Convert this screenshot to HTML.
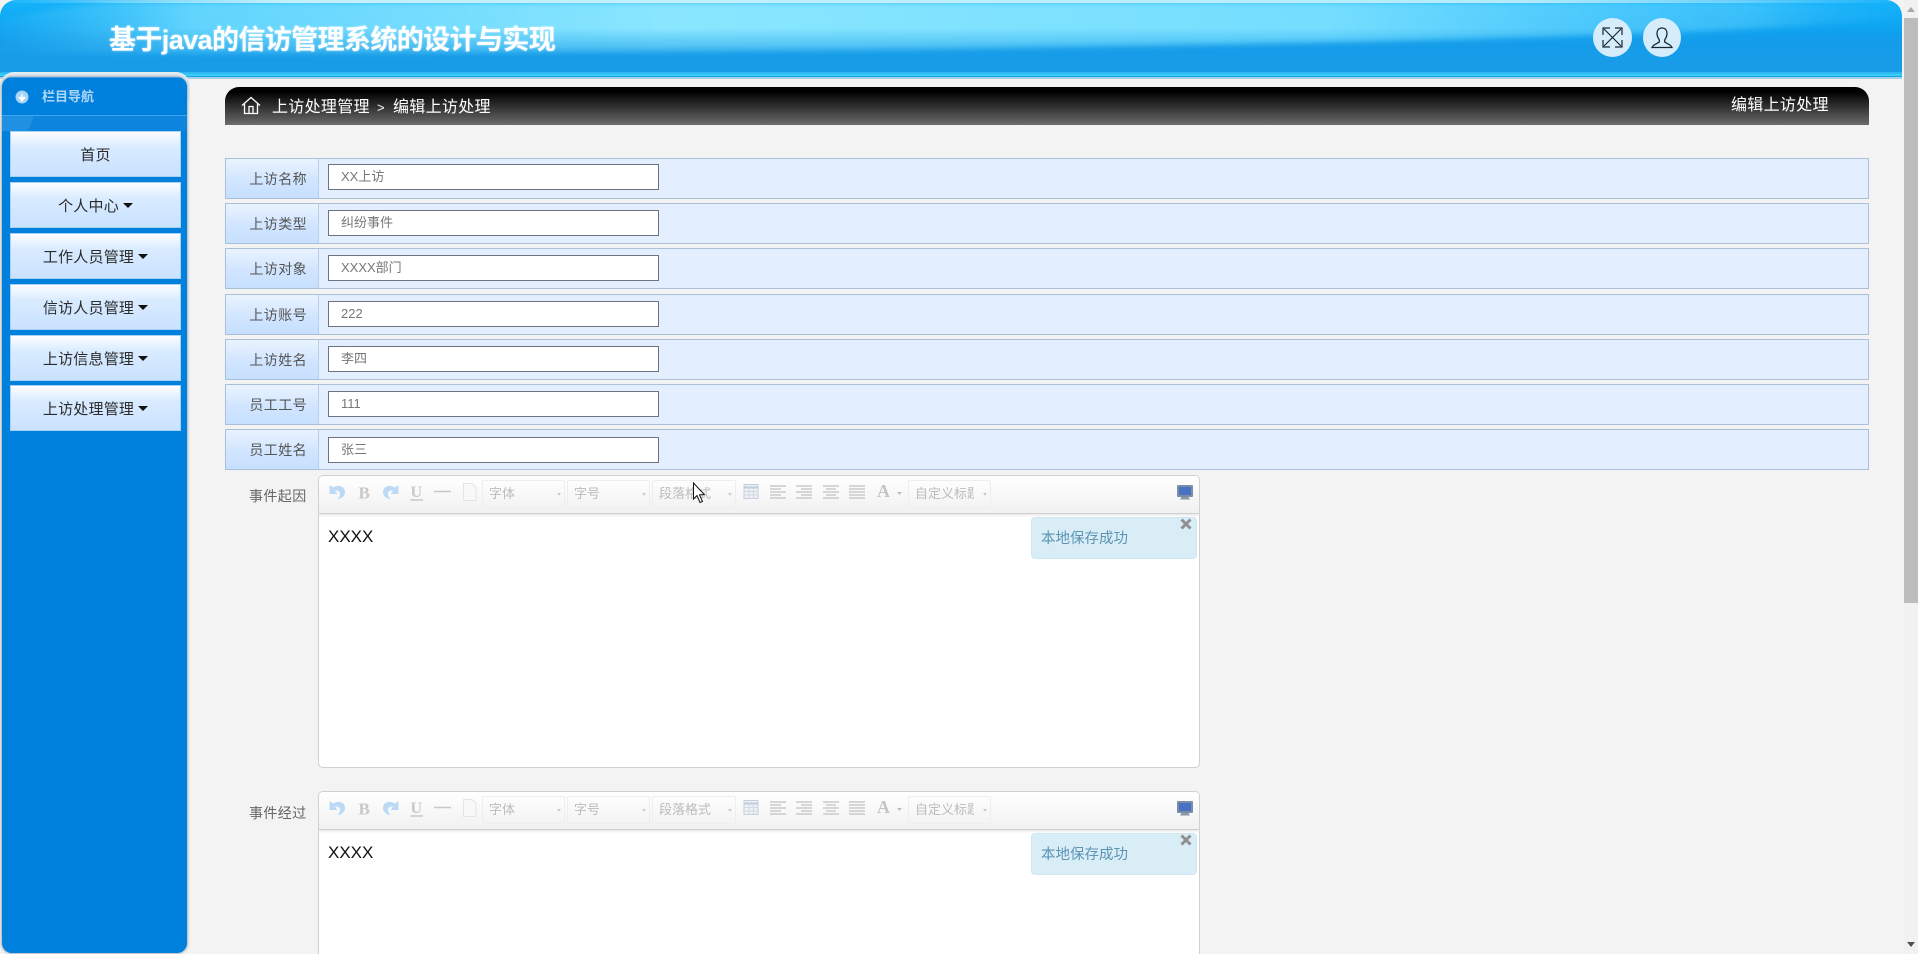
<!DOCTYPE html>
<html lang="zh-CN">
<head>
<meta charset="utf-8">
<title>基于java的信访管理系统的设计与实现</title>
<style>
*{box-sizing:border-box;margin:0;padding:0}
html,body{width:1918px;height:954px;overflow:hidden;background:#f3f3f3}
body{font-family:"Liberation Sans","Noto Sans CJK SC",sans-serif;position:relative}
.a{position:absolute}
#hdr{left:0;top:0;width:1902px;height:79px;border-radius:16px 16px 0 0;overflow:hidden;background:linear-gradient(180deg,#16b4fb 0,#0fa6f2 30%,#0e98e8 60%,#0f90e2 93%)}
#title{left:109px;top:23px;font-size:27px;line-height:34px;font-weight:bold;letter-spacing:-.6px;color:#fff;white-space:nowrap;text-shadow:0 0 2px rgba(255,255,255,.6)}
.circ{width:39px;height:39px;border-radius:50%;background:#d5edfb;top:18px}
#side{left:0;top:72px;width:190px;height:882px;background:linear-gradient(180deg,#e3edf2 0,#e3edf2 24px,#f3f3f3 34px);border-radius:14px 14px 0 0}
#sidein{left:2px;top:77px;width:185px;height:876px;background:#0080dd;border-radius:10px;box-shadow:0 0 3px rgba(60,80,100,.7)}
#navt{left:42px;top:88px;font-size:13px;line-height:18px;font-weight:bold;color:#aed6f6}
.btn{left:10px;width:171px;height:46px;border:1px solid #a8d0f2;background:linear-gradient(180deg,#fbfdff 0,#d9ebff 35%,#c9e2ff 100%);font-size:15px;line-height:47px;letter-spacing:.2px;text-align:center;color:#2b2b2b;white-space:nowrap}
.btn i{display:inline-block;width:0;height:0;border-left:5px solid transparent;border-right:5px solid transparent;border-top:5px solid #111;margin-left:4px;vertical-align:3px}
#crumb{left:225px;top:87px;width:1644px;height:38px;border-radius:14px 14px 0 0;background:linear-gradient(180deg,#000 0,#000 12%,#6c6c6c 100%);color:#fff}
.row{left:225px;width:1644px;height:41px;border:1px solid #aac0d9;background:#e3efff}
.lab{left:0;top:0;width:93px;height:39px;background:linear-gradient(180deg,#eaf3ff 0,#cfe4ff 60%,#c7e0ff 100%);border-right:1px solid #b9d0ea;font-size:14px;line-height:41px;letter-spacing:.4px;text-align:right;padding-right:11px;color:#555}
.inp{left:102px;top:6px;width:331px;height:26px;background:#fff;border:1px solid #6f7380;font-size:13px;line-height:24px;padding-left:12px;color:#777;white-space:nowrap}
.elab{left:249px;font-size:14px;line-height:20px;letter-spacing:.4px;color:#666;white-space:nowrap}
.ed{left:318px;width:882px;height:293px;background:#fff;border:1px solid #d0d0d0;border-radius:5px;overflow:hidden}
.tb{left:0;top:0;width:880px;height:38px;background:linear-gradient(180deg,#fff 0,#f1f1f1 100%);border-bottom:1px solid #cfcfcf;box-shadow:0 1px 3px rgba(0,0,0,.12)}
.sel{top:4px;height:28px;border:1px solid #eee;border-radius:2px;font-size:13px;line-height:26px;padding-left:6px;color:#bbb;overflow:hidden;white-space:nowrap}
.sel b{position:absolute;right:3px;top:12px;width:0;height:0;border-left:2px solid transparent;border-right:2px solid transparent;border-top:3px solid #ccc}
.sel span{display:block;overflow:hidden}
.xxxx{left:9px;top:49px;font-size:17px;line-height:24px;color:#111}
.note{left:712px;top:41px;width:166px;height:42px;background:#d9edf7;border:1px solid #cfe7f2;border-radius:4px;font-size:14.5px;line-height:43px;padding-left:9px;color:#5b95b3;white-space:nowrap}
.note svg{position:absolute;left:147px;top:-1px}
#sb{left:1904px;top:0;width:14px;height:954px;background:#f1f1f1}
#th{left:0;top:18px;width:14px;height:585px;background:#bcbcbc}
</style>
</head>
<body>

<div class="a" id="hdr">
  <svg class="a" style="left:0;top:0" width="1902" height="79" viewBox="0 0 1902 79">
    <defs>
      <linearGradient id="g1" x1="0" y1="0" x2="1" y2="0">
        <stop offset="0" stop-color="#4cc8fa" stop-opacity=".1"/>
        <stop offset=".1" stop-color="#6fdcff" stop-opacity=".85"/>
        <stop offset=".35" stop-color="#8ae6ff"/>
        <stop offset=".7" stop-color="#74deff"/>
        <stop offset=".92" stop-color="#5fd2ff" stop-opacity=".5"/>
        <stop offset="1" stop-color="#2cbcfb" stop-opacity=".05"/>
      </linearGradient>
      <linearGradient id="g2" x1="0" y1="0" x2="0" y2="1">
        <stop offset="0" stop-color="#1ba0ea" stop-opacity="0"/>
        <stop offset=".4" stop-color="#1ba0ea" stop-opacity=".55"/>
        <stop offset="1" stop-color="#1b9de8" stop-opacity=".9"/>
      </linearGradient>
      <linearGradient id="g3" x1="0" y1="0" x2="1" y2="0">
        <stop offset="0" stop-color="#fff" stop-opacity="0"/>
        <stop offset=".15" stop-color="#e8fbff" stop-opacity=".8"/>
        <stop offset=".8" stop-color="#d4f6ff" stop-opacity=".8"/>
        <stop offset="1" stop-color="#fff" stop-opacity="0"/>
      </linearGradient>
      <filter id="bl" x="-5%" y="-20%" width="110%" height="140%"><feGaussianBlur stdDeviation="3"/></filter>
    </defs>
    <path filter="url(#bl)" d="M0 20C60 6 100 2 140 2H1760C1800 2 1860 8 1902 12V18C1700 38 1300 44 900 50C500 53 200 54 0 54Z" fill="url(#g1)"/>
    <rect x="0" y="28" width="1902" height="51" fill="url(#g2)"/>
    <rect x="0" y="0" width="1902" height="3" fill="url(#g3)"/>
    <rect x="0" y="72" width="1902" height="2" fill="#2fb9f0"/>
    <rect x="0" y="74" width="1902" height="2" fill="#37d0f8"/>
    <rect x="0" y="76" width="1902" height="1" fill="#18a3df"/>
    <rect x="0" y="77" width="1902" height="2" fill="#a8cfe8"/>
  </svg>
</div>
<div class="a" id="title">基于java的信访管理系统的设计与实现</div>
<div class="a circ" style="left:1593px">
  <svg width="39" height="39" viewBox="0 0 39 39" fill="none" stroke="#1a2630" stroke-width="1.2">
    <path d="M11 11L28 28M28 11L11 28"/>
    <path d="M10 17V10H17M22 10H29V17M29 22V29H22M17 29H10V22"/>
  </svg>
</div>
<div class="a circ" style="left:1643px;width:38px">
  <svg width="38" height="39" viewBox="0 0 38 39" fill="none" stroke="#1a2630" stroke-width="1.3">
    <path d="M19 10C15.500 10 14 12.500 14 15.500C14 18.500 15.500 20.500 16.300 22V24C14.500 25.500 10 26.500 9 29.500H29C28 26.500 23.500 25.500 21.700 24V22C22.500 20.500 24 18.500 24 15.500C24 12.500 22.500 10 19 10Z"/>
  </svg>
</div>

<div class="a" id="side"></div>
<div class="a" id="sidein">
  <svg class="a" style="left:0;top:0" width="185" height="54" viewBox="0 0 185 54">
    <path d="M0 38H185V54H0Z" fill="#0d85de"/>
    <path d="M0 38H32L26 54H0Z" fill="#2090e2"/>
    <path d="M8 0H177" stroke="#3e9ce8" stroke-width="2"/>
    <path d="M0 38.500H185" stroke="#3fa4ee" stroke-width="1"/>
    <circle cx="20" cy="20" r="6.500" fill="#a5d4f6"/>
    <path d="M20 16.500V21M17 20.500L20 24L23 20.500Z" fill="#fff" stroke="#fff" stroke-width="1.200"/>
  </svg>
</div>
<div class="a" id="navt">栏目导航</div>

<div class="a btn" style="top:131px">首页</div>
<div class="a btn" style="top:182px">个人中心<i></i></div>
<div class="a btn" style="top:233px">工作人员管理<i></i></div>
<div class="a btn" style="top:284px">信访人员管理<i></i></div>
<div class="a btn" style="top:335px">上访信息管理<i></i></div>
<div class="a btn" style="top:385px">上访处理管理<i></i></div>

<div class="a" id="crumb">
  <svg class="a" style="left:16px;top:9px" width="20" height="19" viewBox="0 0 20 19" fill="none" stroke="#fff" stroke-width="1.300">
    <path d="M1 9.500L10 1.500L19 9.500"/>
    <path d="M3.500 8V17.500H16.500V8"/>
    <path d="M8 17.500V10.500H12V17.500"/>
  </svg>
  <div class="a" style="left:47px;top:10px;font-size:16px;line-height:22px;white-space:nowrap;letter-spacing:.3px">上访处理管理</div>
  <div class="a" style="left:152px;top:10px;font-size:13px;line-height:22px">&gt;</div>
  <div class="a" style="left:168px;top:10px;font-size:16px;line-height:22px;white-space:nowrap;letter-spacing:.3px">编辑上访处理</div>
  <div class="a" style="left:1506px;top:8px;font-size:16px;line-height:22px;white-space:nowrap;letter-spacing:.3px">编辑上访处理</div>
</div>

<div class="a row" style="top:158px"><div class="a lab">上访名称</div><div class="a inp" style="top:5px">XX上访</div></div>
<div class="a row" style="top:203px"><div class="a lab">上访类型</div><div class="a inp">纠纷事件</div></div>
<div class="a row" style="top:248px"><div class="a lab">上访对象</div><div class="a inp">XXXX部门</div></div>
<div class="a row" style="top:294px"><div class="a lab">上访账号</div><div class="a inp">222</div></div>
<div class="a row" style="top:339px"><div class="a lab">上访姓名</div><div class="a inp">李四</div></div>
<div class="a row" style="top:384px"><div class="a lab">员工工号</div><div class="a inp">111</div></div>
<div class="a row" style="top:429px"><div class="a lab">员工姓名</div><div class="a inp" style="top:7px">张三</div></div>

<div class="a elab" style="top:486px">事件起因</div>
<div class="a ed" style="top:475px">
  <div class="a tb">
    <svg class="a" style="left:1px;top:-1px" width="879" height="37" viewBox="0 0 879 37" fill="none">
      <path d="M9.500 10V19H17.500L15 16C18 15 20 16.500 20 19C20 21 19 22.500 17.500 24C22.500 23.500 25 20.500 25 17C25 11.500 18.500 9 13.500 12.500Z" fill="#bcdaf5"/>
      <text x="38.500" y="23.500" font-family="Liberation Serif,serif" font-weight="bold" font-size="17" fill="#c8c8c8">B</text>
      <path d="M78.500 10V19H70.500L73 16C70 15 68 16.500 68 19C68 21 69 22.500 70.500 24C65.500 23.500 63 20.500 63 17C63 11.500 69.500 9 74.500 12.500Z" fill="#bcdaf5"/>
      <text x="90.500" y="22" font-family="Liberation Serif,serif" font-weight="bold" font-size="16" fill="#c8c8c8">U</text>
      <path d="M90.500 25H103" stroke="#c8c8c8" stroke-width="1.500"/>
      <path d="M114 16.500H131" stroke="#c8c8c8" stroke-width="1.500"/>
      <path d="M143.500 8.500H152L156 12.500V25.500H143.500Z" fill="#f8f8f8" stroke="#e4e4e4"/>
      <rect x="424" y="9.500" width="14" height="14" fill="#eef2f7" stroke="#c6ced9"/>
      <path d="M424 12.500H438" stroke="#bccbdf" stroke-width="2"/>
      <path d="M424 16.500H438M424 20H438M429 12V24M433.500 12V24" stroke="#d2d9e3"/>
      <g stroke="#cacaca" stroke-width="1.500">
        <path d="M450 11H466M450 14H461M450 17H466M450 20H461M450 23H466"/>
        <path d="M476 11H492M481 14H492M476 17H492M481 20H492M476 23H492"/>
        <path d="M503 11H519M506 14H516M503 17H519M506 20H516M503 23H519"/>
        <path d="M529 11H545M529 14H545M529 17H545M529 20H545M529 23H545"/>
      </g>
      <text x="557" y="22" font-family="Liberation Serif,serif" font-weight="bold" font-size="18" fill="#c4c4c4">A</text>
      <path d="M577 17H582L579.500 20Z" fill="#bcbcbc"/>
      <rect x="857" y="10" width="16" height="12" rx="1" fill="#7b8ea6"/>
      <rect x="859" y="12" width="12" height="8" fill="#4a72c4"/>
      <path d="M860 24.500H870L868.500 22H861.500Z" fill="#8c96a4"/>
    </svg>
    <div class="a sel" style="left:163px;width:83px"><span>字体</span><b></b></div>
    <div class="a sel" style="left:248px;width:83px"><span>字号</span><b></b></div>
    <div class="a sel" style="left:333px;width:84px"><span>段落格式</span><b></b></div>
    <div class="a sel" style="left:589px;width:83px"><span style="width:59px">自定义标题</span><b></b></div>
  </div>
  <div class="a xxxx">XXXX</div>
  <div class="a note">本地保存成功
    <svg width="14" height="14" viewBox="0 0 14 14"><path d="M2.500 2.500L11.500 11.500M11.500 2.500L2.500 11.500" stroke="#8f8f8f" stroke-width="3"/></svg>
  </div>
</div>

<div class="a elab" style="top:803px">事件经过</div>
<div class="a ed" style="top:791px;height:163px;border-bottom:0;border-radius:5px 5px 0 0">
  <div class="a tb">
    <svg class="a" style="left:1px;top:-1px" width="879" height="37" viewBox="0 0 879 37" fill="none">
      <path d="M9.500 10V19H17.500L15 16C18 15 20 16.500 20 19C20 21 19 22.500 17.500 24C22.500 23.500 25 20.500 25 17C25 11.500 18.500 9 13.500 12.500Z" fill="#bcdaf5"/>
      <text x="38.500" y="23.500" font-family="Liberation Serif,serif" font-weight="bold" font-size="17" fill="#c8c8c8">B</text>
      <path d="M78.500 10V19H70.500L73 16C70 15 68 16.500 68 19C68 21 69 22.500 70.500 24C65.500 23.500 63 20.500 63 17C63 11.500 69.500 9 74.500 12.500Z" fill="#bcdaf5"/>
      <text x="90.500" y="22" font-family="Liberation Serif,serif" font-weight="bold" font-size="16" fill="#c8c8c8">U</text>
      <path d="M90.500 25H103" stroke="#c8c8c8" stroke-width="1.500"/>
      <path d="M114 16.500H131" stroke="#c8c8c8" stroke-width="1.500"/>
      <path d="M143.500 8.500H152L156 12.500V25.500H143.500Z" fill="#f8f8f8" stroke="#e4e4e4"/>
      <rect x="424" y="9.500" width="14" height="14" fill="#eef2f7" stroke="#c6ced9"/>
      <path d="M424 12.500H438" stroke="#bccbdf" stroke-width="2"/>
      <path d="M424 16.500H438M424 20H438M429 12V24M433.500 12V24" stroke="#d2d9e3"/>
      <g stroke="#cacaca" stroke-width="1.500">
        <path d="M450 11H466M450 14H461M450 17H466M450 20H461M450 23H466"/>
        <path d="M476 11H492M481 14H492M476 17H492M481 20H492M476 23H492"/>
        <path d="M503 11H519M506 14H516M503 17H519M506 20H516M503 23H519"/>
        <path d="M529 11H545M529 14H545M529 17H545M529 20H545M529 23H545"/>
      </g>
      <text x="557" y="22" font-family="Liberation Serif,serif" font-weight="bold" font-size="18" fill="#c4c4c4">A</text>
      <path d="M577 17H582L579.500 20Z" fill="#bcbcbc"/>
      <rect x="857" y="10" width="16" height="12" rx="1" fill="#7b8ea6"/>
      <rect x="859" y="12" width="12" height="8" fill="#4a72c4"/>
      <path d="M860 24.500H870L868.500 22H861.500Z" fill="#8c96a4"/>
    </svg>
    <div class="a sel" style="left:163px;width:83px"><span>字体</span><b></b></div>
    <div class="a sel" style="left:248px;width:83px"><span>字号</span><b></b></div>
    <div class="a sel" style="left:333px;width:84px"><span>段落格式</span><b></b></div>
    <div class="a sel" style="left:589px;width:83px"><span style="width:59px">自定义标题</span><b></b></div>
  </div>
  <div class="a xxxx">XXXX</div>
  <div class="a note">本地保存成功
    <svg width="14" height="14" viewBox="0 0 14 14"><path d="M2.500 2.500L11.500 11.500M11.500 2.500L2.500 11.500" stroke="#8f8f8f" stroke-width="3"/></svg>
  </div>
</div>

<svg class="a" style="left:692px;top:482px" width="14" height="22" viewBox="0 0 14 22">
  <path d="M1.500 1V17L5 13.500L8 20.500L10.500 19.500L7.500 12.800H12.500Z" fill="#fff" stroke="#111" stroke-width="1"/>
</svg>

<div class="a" id="sb">
  <svg class="a" style="left:0;top:0" width="14" height="18" viewBox="0 0 14 18"><path d="M3 12L7 7L11 12Z" fill="#a8a8a8"/></svg>
  <div class="a" id="th"></div>
  <svg class="a" style="left:0;top:936px" width="14" height="18" viewBox="0 0 14 18"><path d="M3 6L7 11L11 6Z" fill="#505050"/></svg>
</div>
</body>
</html>
